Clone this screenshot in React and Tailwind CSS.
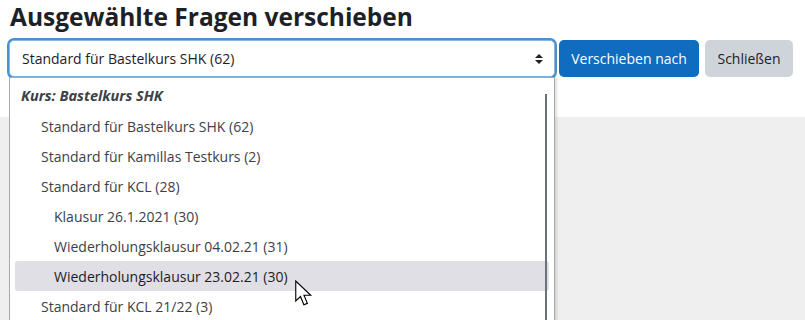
const options = [
  { label: 'Standard für Bastelkurs SHK (62)', level: 1 },
  { label: 'Standard für Kamillas Testkurs (2)', level: 1 },
  { label: 'Standard für KCL (28)', level: 1 },
  { label: 'Klausur 26.1.2021 (30)', level: 2 },
  { label: 'Wiederholungsklausur 04.02.21 (31)', level: 2 },
  { label: 'Wiederholungsklausur 23.02.21 (30)', level: 2, hover: true },
  { label: 'Standard für KCL 21/22 (3)', level: 1 },
];

function Cursor() {
  return (
    <svg width="20" height="28" viewBox="0 0 16 22" className="absolute left-[295px] top-[280px]">
      <path
        d="M0.6 0.6 L0.6 16.6 L4.4 13 L7.1 19.6 L9.9 18.5 L7.2 12 L12.6 12 Z"
        fill="#fff"
        stroke="#000"
        strokeWidth="0.9"
        strokeLinejoin="miter"
      />
    </svg>
  );
}

export default function App() {
  return (
    <div className="relative flex h-[320px] w-[805px] flex-col overflow-hidden bg-white font-['Open_Sans',sans-serif]">
      {/* Kopfzeile */}
      <h2 className="pl-[10px] pt-[1px] text-[24.5px] font-bold leading-[32px] text-[#1d2125]">
        Ausgewählte Fragen verschieben
      </h2>
      <div className="mt-[7px] flex items-start pl-[9px]">
        <div className="flex h-[37px] w-[546px] items-center justify-between rounded-[5px] border border-[#87b6df] bg-white pl-[12px] pr-[11px] shadow-[0_0_0_2px_rgba(15,108,191,0.75)]">
          <span className="text-[14px] text-[#1d2125]">Standard für Bastelkurs SHK (62)</span>
          <svg width="8" height="12" viewBox="0 0 8 12">
            <path d="M0 5 L4 1 L8 5 Z M0 7 L4 11 L8 7 Z" fill="#1d2125" />
          </svg>
        </div>
        <button className="ml-[4px] h-[37px] w-[140px] rounded-[5px] bg-[#0f6cbf] text-[14px] text-white">
          Verschieben nach
        </button>
        <button className="ml-[6px] h-[37px] w-[88px] rounded-[5px] bg-[#ced4da] text-[14px] text-[#1d2125]">
          Schließen
        </button>
      </div>
      <div className="mt-[40px] flex-1 bg-[#efefef]" />

      {/* Aufgeklappte Liste */}
      <div className="absolute left-[9px] top-[77px] h-[260px] w-[546px] border-l border-r border-t border-[#a9a9a9] bg-white pt-[3px] shadow-[2px_0_2px_rgba(0,0,0,0.12)]">
        <div className="flex h-[30px] items-center pl-[11px] text-[14.5px] font-bold italic text-[#3c4147]">
          Kurs: Bastelkurs SHK
        </div>
        {options.map((o) => (
          <div
            key={o.label}
            className={
              'mx-[5px] flex h-[30px] items-center rounded-[3px] text-[14px] ' +
              (o.level === 2 ? 'pl-[39px] ' : 'pl-[26px] ') +
              (o.hover ? 'bg-[#e0dfe5] text-[#1d2125]' : 'text-[#3c4147]')
            }
          >
            {o.label}
          </div>
        ))}
        <div className="absolute right-[7px] top-[16px] h-[250px] w-[2px] bg-[#6b7179]" />
      </div>

      <Cursor />
    </div>
  );
}
